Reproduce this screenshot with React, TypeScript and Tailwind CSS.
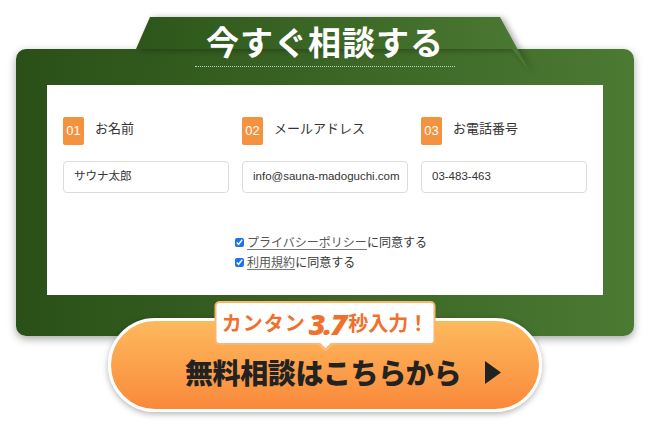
const jp = { fontFamily: '"Noto Sans CJK JP", "Noto Sans", sans-serif' };
const latin = { fontFamily: '"Liberation Sans", "Noto Sans CJK JP", sans-serif' };

const fields = [
  { no: "01", label: "お名前", value: "サウナ太郎" },
  { no: "02", label: "メールアドレス", value: "info@sauna-madoguchi.com" },
  { no: "03", label: "お電話番号", value: "03-483-463" },
];

export default function App() {
  return (
    <div className="w-[650px] h-[427px] bg-white overflow-hidden" style={jp}>
      {/* green panel */}
      <div className="relative mx-[16px] mt-[49px] h-[287px] rounded-[10px] bg-gradient-to-r from-[#2a5017] to-[#4b7a33] shadow-[0_3px_8px_rgba(0,0,0,0.35)] px-[31px] pt-[36px]">
        <div className="absolute left-[114px] top-[-32px] w-[404px] h-[56px] [filter:drop-shadow(3px_1px_3px_rgba(0,0,0,0.35))]">
          <div className="w-full h-full bg-gradient-to-r from-[#2d551a] to-[#4b7a33] [clip-path:polygon(6px_32px,20px_0,370px_0,400px_55px,382px_32px)]" />
        </div>
        <div className="absolute left-0 right-0 top-[-30px] flex justify-center">
          <div className="w-[260px] text-center text-white text-[33px] font-bold leading-[44px] tracking-[1px] pb-[3px] border-b border-dotted border-white/70">
            今すぐ相談する
          </div>
        </div>

        {/* white card */}
        <div className="relative h-[210px] bg-white pt-[32px] px-[16px]">
          <div className="grid grid-cols-3 gap-[13px]">
            {fields.map((f) => (
              <div key={f.no}>
                <div className="flex items-start gap-[11px]">
                  <div className="w-[21px] h-[28px] bg-[#f3923f] rounded-[2px] text-white text-[13px] flex items-center justify-center" style={latin}>
                    {f.no}
                  </div>
                  <div className="text-[13px] leading-[20px] mt-[1px] text-[#333]">{f.label}</div>
                </div>
                <div className="mt-[16px] h-[32px] border border-[#dcdcdc] rounded-[4px] px-[10px] flex items-center text-[11.5px] text-[#333] whitespace-nowrap overflow-hidden" style={latin}>
                  {f.value}
                </div>
              </div>
            ))}
          </div>

          <div className="mt-[39px] w-fit mx-auto pl-[12px] flex flex-col text-[12px] leading-[20px] text-[#333]">
            <label className="flex items-center gap-[3px]">
              <input type="checkbox" defaultChecked className="w-[9px] h-[9px] accent-[#1a73e8] m-0" />
              <span>
                <span className="underline decoration-[#777] underline-offset-2 text-[#555]">プライバシーポリシー</span>に同意する
              </span>
            </label>
            <label className="flex items-center gap-[3px]">
              <input type="checkbox" defaultChecked className="w-[9px] h-[9px] accent-[#1a73e8] m-0" />
              <span>
                <span className="underline decoration-[#777] underline-offset-2 text-[#555]">利用規約</span>に同意する
              </span>
            </label>
          </div>
        </div>
      </div>

      {/* CTA button */}
      <div className="relative mx-auto mt-[-18px] w-[434px] h-[94px] rounded-full border-[3px] border-white bg-gradient-to-b from-[#fdb95d] to-[#f9893a] shadow-[0_2px_6px_rgba(0,0,0,0.3)] flex items-center justify-center pl-[36px] pt-[14px] gap-[24px]">
        <span className="text-[28px] font-black text-[#222] tracking-[-0.4px]">無料相談はこちらから</span>
        <svg width="16" height="23" viewBox="0 0 16 23">
          <polygon points="0,0 16,11.5 0,23" fill="#222" />
        </svg>

        <div className="absolute left-1/2 -translate-x-1/2 top-[-20px] w-[221px] h-[44px] bg-white border-2 border-[#f9b673] rounded-[5px] flex items-center justify-center text-[#f0712e] font-bold">
          <span className="text-[20px] tracking-[1px]">カンタン</span>
          <span className="text-[29px] font-black italic tracking-[-2px] mx-[3px] leading-none" style={{ fontFamily: '"Noto Sans", sans-serif' }}>3.7</span>
          <span className="text-[20px]">秒入力！</span>
          <div className="absolute left-1/2 -translate-x-1/2 bottom-[-6px] w-[10px] h-[10px] rotate-45 bg-white border-r-2 border-b-2 border-[#f9b673]" />
        </div>
      </div>
    </div>
  );
}
